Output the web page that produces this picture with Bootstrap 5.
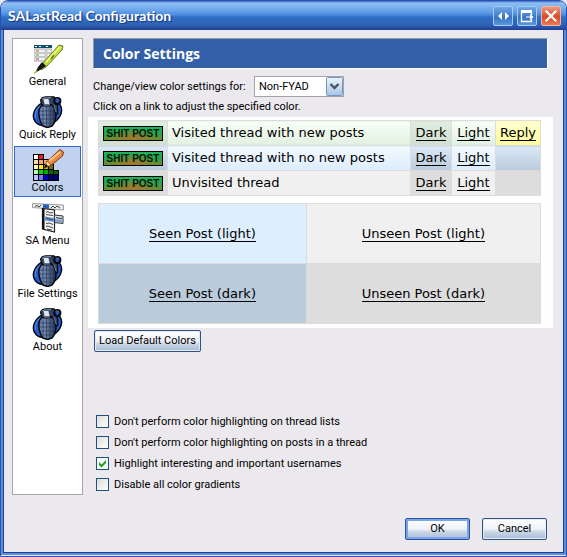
<!DOCTYPE html>
<html lang="en">
<head>
<meta charset="utf-8">
<meta name="viewport" content="width=device-width, initial-scale=1">
<title>SALastRead Configuration</title>
<link rel="stylesheet" href="https://cdn.jsdelivr.net/npm/bootstrap@5.3.0/dist/css/bootstrap.min.css">
<style>
body{background:#eeeaf5;color:#000;font:11px/14px Roboto,"Noto Sans",sans-serif}
.win{min-height:100vh;background:#ebe9ed;border:1px solid #2c50ae;border-radius:8px 8px 0 0;overflow:hidden}
.frame{border:solid #5a8fe0;border-width:0 2px 2px}
.titlebar{height:29px;padding:0 5px 0 7px;background:linear-gradient(#3a64c4 0,#8dc0f3 2px,#66a3ea 10px,#4a8ade 14px,#2f6fc6 16px,#2f62b6 24px,#24479c 28px,#1d3c8c 29px);color:#fff}
.titlebar h1{font:bold 14px/20px Lato,sans-serif;text-shadow:1px 1px 1px #16337c}
.capbtn{width:20px;height:20px;padding:0;border:1px solid #a4cdf5;border-radius:2px;background:linear-gradient(#6fa6e6,#3a74c8 60%,#5b96dc);line-height:0}
.capbtn.shut{border-color:#f0b3a4;background:linear-gradient(#ee9a84,#d84a24 55%,#ec7d58)}
.client{border:solid #1f3f94;border-width:0 1px 1px;padding:8px 10px 12px 8px}
.side{width:71px;min-height:457px;flex:none;background:#fff;border:1px solid #a6a6aa;padding:1px}
.side .items{row-gap:2px}
.side button{height:51px;border:1px solid transparent;background:none;padding:0;color:#000;line-height:14px;white-space:nowrap}
.side button.on{background:#c1d2ee;border-color:#316ac5}
.side svg{display:block;margin:0 auto}
.pane{min-width:0;margin-left:5px}
.head{margin:0 5px;padding:0 9px;background:#335ea8;border:1px solid;border-color:#9a9a9e #fff #fff #9a9a9e;color:#fff;font:bold 14px/29px "Open Sans",sans-serif}
.row-pick{padding:7px 5px 0;gap:8px}
.row-pick label{width:153px;white-space:nowrap}
.pick{width:90px;height:21px;padding:0 20px 0 4px;border:1px solid #a4a4a8;border-radius:0;color:#000;font-size:11px;line-height:18px;background:url("data:image/svg+xml,%3Csvg xmlns='http://www.w3.org/2000/svg' width='17' height='19'%3E%3Cdefs%3E%3ClinearGradient id='g' x2='0' y2='1'%3E%3Cstop stop-color='%23edf4fc'/%3E%3Cstop offset='1' stop-color='%23a8c4e4'/%3E%3C/linearGradient%3E%3C/defs%3E%3Crect x='.5' y='.5' width='16' height='18' rx='1' fill='url(%23g)' stroke='%237299c4'/%3E%3Cpath d='M4.500 7l4 4 4-4' fill='none' stroke='%23475569' stroke-width='2.400'/%3E%3C/svg%3E") right center/17px 19px no-repeat #fff}
.help{padding:3px 5px}
.preview{background:#fff;padding:3px 12px 4px 10px;font:13px/18px "DejaVu Sans",sans-serif}
.preview a{color:#000;text-decoration:none;border-bottom:1px solid #000;line-height:15px;display:inline-block}
.preview table{width:100%;border-collapse:collapse;table-layout:fixed}
.preview td{border:1px solid #dcdcdc;padding:0 4px;height:25px;vertical-align:middle}
.threads td{white-space:nowrap}
.threads td:nth-child(n+3),.threads td:first-child{text-align:center}
.c-icon{width:69px}.c-dark{width:41px}.c-light{width:44px}.c-reply{width:45px}.c-seen{width:47%}
.posts{margin-top:7px}
.posts td{height:60px;text-align:center}
.new-l{background:linear-gradient(#f8fff8,#e0f0e0)}.new-d{background:linear-gradient(#e0eee0,#cfdecf)}
.old-l{background:linear-gradient(#f3f9ff,#dcedfd)}.old-d{background:linear-gradient(#dce9f7,#b9cadb)}
.un-l{background:#f0f0f0}.un-d{background:#ddd}.rep{background:linear-gradient(#ffffcf,#fffb9a)}
.seen-l{background:#def}.seen-d{background:#bacbdb}
.stamp{display:block;height:15px;width:60px;margin:0 auto;border:1px solid #000;background:radial-gradient(ellipse at 50% 90%,#a5762c 0,#76803000 65%),linear-gradient(#20b45c,#20a650 40%,#6c8d2a);font:bold 10px/13px "Liberation Sans",sans-serif;color:#06170a}
.xpbtn{height:22px;padding:0 4px;border:1px solid #305284;border-radius:2px;background:linear-gradient(#fff,#eef2f8 50%,#c9d5e6 65%,#a9bdd6);color:#000;line-height:18px;box-shadow:inset 0 0 0 1px #e4ebf5}
.xpbtn.main{border-color:#2a51a8;box-shadow:inset 0 0 0 2px #7aa5e2}
.xpbtn.defaults{min-width:107px;margin:2px 0 0 6px}
.cmd{width:65px}
.opts{margin:59px 0 0 8px}
.opt{height:21px}
.opt label{padding-left:5px}
.tick{appearance:none;flex:none;width:13px;height:13px;margin:0;border:1px solid #1c5180;background:linear-gradient(135deg,#dcdcd7,#fff)}
.tick:checked{background:url("data:image/svg+xml,%3Csvg xmlns='http://www.w3.org/2000/svg' width='11' height='11'%3E%3Cpath d='M2 4v3l2.500 2.500L9 5V2L4.500 6.500z' fill='%2321a121'/%3E%3C/svg%3E") #f5f8f4}
.foot{margin-top:23px;padding-right:6px;gap:12px}
</style>
</head>
<body>
<svg width="0" height="0" class="position-absolute" aria-hidden="true">
<defs><linearGradient id="steel"><stop stop-color="#6d83a8"/><stop offset=".35" stop-color="#7187ab"/><stop offset=".7" stop-color="#475a7d"/><stop offset="1" stop-color="#2a3856"/></linearGradient></defs>
<symbol id="grenade" viewBox="0 0 32 32">
<ellipse cx="15.500" cy="17" rx="15" ry="11.500" transform="rotate(-32 15.500 17)" fill="#2458c6" stroke="#05070d" stroke-width="1.400"/>
<path d="M3.500 22c-1-6 2-10 5-12" fill="none" stroke="#4b86e8" stroke-width="1.200"/>
<path d="M10.500 9c-3 2-4 6-3.500 10 .5 5 1.500 8 4 11l4.500 1.500 4.500-1.500c3-3 4-7 4-12 0-5-1.500-8-4.500-9z" fill="url(#steel)" stroke="#05070d" stroke-width="1.500"/>
<path d="M8 15h15M7.500 19h16M8.500 23h14M10.500 27h10M11 11v18M14.500 10v21M18 10v21M21.500 13v13" fill="none" stroke="#22304e" stroke-width=".9" stroke-opacity=".65"/>
<path d="M8.500 4l2-2.500L14 .8h8l2.500 3.500 1 6 .3 7-2 1-1.800-7-3-3-2 1.500h-6L9.500 8z" fill="#33425f" stroke="#05070d" stroke-width="1.200"/>
<path d="M11.500 3h5l1 5h-5z" fill="#dfe5ed"/><path d="M10 3l2-1 7-.5" fill="none" stroke="#8797b1"/>
<path d="M12 9h6" stroke="#8a9ab4"/>
<path d="M22 9l2 7" stroke="#5d7193" stroke-width="1.200"/>
<circle cx="25.300" cy="5" r="3" fill="#2458c6" stroke="#05070d" stroke-width="2.200"/>
<path d="M23.500 3.500a2.500 2.500 0 0 1 4 1" fill="none" stroke="#667fae" stroke-width=".8"/>
</symbol>
</svg>
<div class="win">
<header class="titlebar d-flex align-items-center">
<h1 class="m-0 flex-grow-1 text-nowrap">SALastRead Configuration</h1>
<div class="d-flex gap-1">
<button class="capbtn" type="button" aria-label="Resize"><svg width="18" height="18"><path d="M8 5v8L4 9zM11 5v8l4-4z" fill="#fff"/></svg></button>
<button class="capbtn" type="button" aria-label="Dock"><svg width="18" height="18"><path d="M3 4h11M3.500 4v10.500h10V12M13.500 4v4" fill="none" stroke="#fff" stroke-width="1.300"/><path d="M3 3h11v3H3zM8 9.400h4V7l3.500 3L12 13v-2.400H8z" fill="#fff"/></svg></button>
<button class="capbtn shut" type="button" aria-label="Close"><svg width="18" height="18"><path d="M4.500 4.500l9 9m0-9l-9 9" stroke="#fff" stroke-width="2.200" stroke-linecap="square"/></svg></button>
</div>
</header>
<div class="frame"><div class="client">
<div class="d-flex">
<nav class="side" aria-label="Sections">
<div class="items d-grid">
<button type="button"><svg width="32" height="32" viewBox="0 0 32 32"><path d="M2 3h18v16H2z" fill="#d0d2d4"/><path d="M2 2h18v3H2z" fill="#0b506e"/><path d="M3 3.500h2M7 3.500h2M14 3.500h2" stroke="#fff"/><path d="M3 6.500h10v3H3zM3 10.500h10v3H3zM3 14.500h10v3H3zM15 6.500h4v3h-4zM15 10.500h3v3h-3z" fill="#f4f4f4" stroke="#aaa" stroke-width=".5"/><path d="M4 8h3" stroke="#f08a5a" stroke-width="1.500"/><path d="M4 12h3" stroke="#85c75b" stroke-width="1.500"/><path d="M4 16h3" stroke="#e66bad" stroke-width="1.500"/><path d="M27 2l4 1-1 4-16 17-5 3 2-7z" fill="#c3dc35" stroke="#536318" stroke-width=".8"/><path d="M28 4L14 19" stroke="#f2fa8b" stroke-width="1.800"/><path d="M22 12l-3 4" stroke="#697c10" stroke-width="1.500"/><path d="M10 19l4 4-6 4-5 3 3-6z" fill="#161616"/><path d="M2 30.500l3-3" stroke="#b5c54a" stroke-width="1.500"/></svg>General</button>
<button type="button"><svg width="32" height="32"><use href="#grenade"/></svg>Quick Reply</button>
<button type="button" class="on" aria-current="page"><svg width="32" height="32" viewBox="0 0 32 32"><path d="M1 5h11v5h5v5h5v6h5v11H1z" fill="#000"/><path d="M2 6h4v4H2z" fill="#fff"/><path d="M7 6h4v4H7z" fill="#ed1c24"/><path d="M2 11h4v4H2z" fill="#ffd8b0"/><path d="M7 11h4v4H7zM12 11h4v4h-4z" fill="#f2a66c"/><path d="M2 16h4v4H2z" fill="#fffbb0"/><path d="M7 16h4v4H7z" fill="#ffee00"/><path d="M12 16h4v4h-4z" fill="#c8b800"/><path d="M17 16h4v4h-4z" fill="#756e12"/><path d="M2 21h4v4H2z" fill="#b9ffb9"/><path d="M7 21h4v4H7z" fill="#00e000"/><path d="M12 21h4v4h-4z" fill="#00b000"/><path d="M17 21h4v4h-4zM22 22h4v3h-4z" fill="#006b00"/><path d="M2 26h4v5H2z" fill="#c0c0ff"/><path d="M7 26h4v5H7z" fill="#7878f0"/><path d="M12 26h4v5h-4z" fill="#0000b8"/><path d="M17 26h4v5h-4zM22 26h4v5h-4z" fill="#000078"/><path d="M28 .5l3.500 2.500-1 4-11 9-7 3 3-7z" fill="#ed8a42" stroke="#753308"/><path d="M28 3L17 12" stroke="#ffc391" stroke-width="2"/><path d="M15 12l4 4-7 3z" fill="#f7dcb8" stroke="#753308" stroke-width=".6"/><path d="M12 19l2-4 2 2z" fill="#000"/></svg>Colors</button>
<button type="button"><svg width="32" height="32" viewBox="0 0 32 32"><path d="M.5 1.500L31.500 3v5L.5 5.500z" fill="#ececec" stroke="#888" stroke-width=".8"/><path d="M11 2.200l6 .4v4.200L11 6.200z" fill="#2563b3"/><path d="M3 4.500l2-1 2 1.500 2-2M19 6l2-2 2 2 2-2 3 2" fill="none" stroke="#444"/><path d="M10.500 6.500l12 1.500v22l-12-3z" fill="#f5f5f5" stroke="#222" stroke-width="1.200"/><path d="M10 6l2.500 1v20.500l-2.500-1z" fill="#111"/><path d="M13 14.500l9 1.500v4l-9-1.500z" fill="#6698df"/><path d="M14 10.500l2-1 2 1.500 3-.5M14 12.500l3 .5 4 .5M14 16l3 1 4 1M14 21.500l3-.5 4 1.500M14 24.500l2-.5 5 2M15 27l5 1" fill="none" stroke="#333" stroke-width=".9"/><path d="M22.500 13l8.500 1v7.500l-8.500-1z" fill="#d8e2ef" stroke="#333"/><path d="M23 17l7.500 1v2.500L23 19.500z" fill="#7b9fd1"/><path d="M24 15.500l2 .5 4 .5" fill="none" stroke="#333"/></svg>SA Menu</button>
<button type="button"><svg width="32" height="32"><use href="#grenade"/></svg>File Settings</button>
<button type="button"><svg width="32" height="32"><use href="#grenade"/></svg>About</button>
</div>
</nav>
<main class="pane flex-grow-1">
<h2 class="head">Color Settings</h2>
<div class="row-pick d-flex align-items-center"><label for="forum">Change/view color settings for:</label>
<select id="forum" class="pick form-select"><option>Non-FYAD</option></select></div>
<p class="mb-0 help">Click on a link to adjust the specified color.</p>
<section class="preview">
<table class="threads"><colgroup><col class="c-icon"><col><col class="c-dark"><col class="c-light"><col class="c-reply"></colgroup>
<tr><td class="new-d"><span class="stamp">SHIT POST</span></td><td class="new-l">Visited thread with new posts</td><td class="new-d"><a href="#">Dark</a></td><td class="new-l"><a href="#">Light</a></td><td class="rep"><a href="#">Reply</a></td></tr>
<tr><td class="old-d"><span class="stamp">SHIT POST</span></td><td class="old-l">Visited thread with no new posts</td><td class="old-d"><a href="#">Dark</a></td><td class="old-l"><a href="#">Light</a></td><td class="old-d"></td></tr>
<tr><td class="un-d"><span class="stamp">SHIT POST</span></td><td class="un-l">Unvisited thread</td><td class="un-d"><a href="#">Dark</a></td><td class="un-l"><a href="#">Light</a></td><td class="un-d"></td></tr>
</table>
<table class="posts"><colgroup><col class="c-seen"><col></colgroup>
<tr><td class="seen-l"><a href="#">Seen Post (light)</a></td><td class="un-l"><a href="#">Unseen Post (light)</a></td></tr>
<tr><td class="seen-d"><a href="#">Seen Post (dark)</a></td><td class="un-d"><a href="#">Unseen Post (dark)</a></td></tr>
</table>
</section>
<button class="xpbtn defaults" type="button">Load Default Colors</button>
<div class="opts">
<div class="opt d-flex align-items-center"><input class="tick" type="checkbox" id="o1"><label for="o1">Don't perform color highlighting on thread lists</label></div>
<div class="opt d-flex align-items-center"><input class="tick" type="checkbox" id="o2"><label for="o2">Don't perform color highlighting on posts in a thread</label></div>
<div class="opt d-flex align-items-center"><input class="tick" type="checkbox" id="o3" checked><label for="o3">Highlight interesting and important usernames</label></div>
<div class="opt d-flex align-items-center"><input class="tick" type="checkbox" id="o4"><label for="o4">Disable all color gradients</label></div>
</div>
</main>
</div>
<div class="foot d-flex justify-content-end"><button class="xpbtn main cmd" type="button">OK</button><button class="xpbtn cmd" type="button">Cancel</button></div>
</div></div>
</div>
<script src="https://cdn.jsdelivr.net/npm/bootstrap@5.3.0/dist/js/bootstrap.bundle.min.js"></script>
</body>
</html>
